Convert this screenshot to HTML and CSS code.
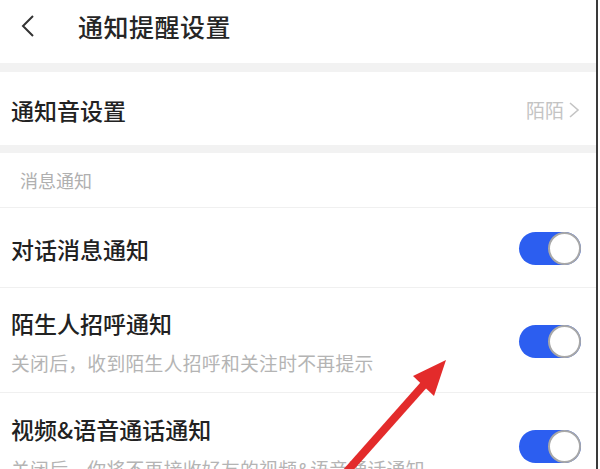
FILE: index.html
```html
<!DOCTYPE html>
<html lang="zh">
<head>
<meta charset="utf-8">
<link rel="stylesheet" href="styles.css">
</head>
<body>
<div class="screen">
  <header class="topbar">
    <svg class="back" width="16" height="24" viewBox="0 0 16 24"><path d="M13 2 L3 12 L13 22" fill="none" stroke="#333" stroke-width="2"/></svg>
    <h1 class="title">通知提醒设置</h1>
  </header>
  <div class="band"></div>
  <div class="row row-sound">
    <span class="label">通知音设置</span>
    <span class="value">陌陌<svg width="12" height="20" viewBox="0 0 12 20"><path d="M2 3 L10 10 L2 17" fill="none" stroke="#c4c4c4" stroke-width="1.6"/></svg></span>
  </div>
  <div class="band band2"></div>
  <div class="section">消息通知</div>
  <div class="row row-toggle">
    <div class="text"><div class="label">对话消息通知</div></div>
    <div class="switch"><div class="knob"></div></div>
  </div>
  <div class="row row-toggle row-tall">
    <div class="text">
      <div class="label">陌生人招呼通知</div>
      <div class="sub">关闭后，收到陌生人招呼和关注时不再提示</div>
    </div>
    <div class="switch"><div class="knob"></div></div>
  </div>
  <div class="row row-toggle row-tall last">
    <div class="text">
      <div class="label">视频&amp;语音通话通知</div>
      <div class="sub">关闭后，你将不再接收好友的视频&amp;语音通话通知</div>
    </div>
    <div class="switch"><div class="knob"></div></div>
  </div>
  <svg class="arrow" width="160" height="130" viewBox="0 0 160 130">
    <line x1="8" y1="125" x2="95" y2="27" stroke="#e32b2b" stroke-width="8" stroke-linecap="butt"/>
    <polygon points="112,8 79,24 100,44" fill="#e32b2b"/>
  </svg>
</div>
</body>
</html>
```

FILE: styles.css
```css
* { box-sizing: border-box; margin: 0; padding: 0; }
html, body { width: 600px; height: 469px; overflow: hidden; background: #fff; }
body {
  font-family: "Noto Sans CJK SC", "Noto Sans", sans-serif;
  color: #222;
}
.screen {
  position: relative;
  width: 598px;
  height: 469px;
  border-right: 2px solid #3a3a3a;
  background: #fff;
  overflow: hidden;
}
.topbar {
  height: 63px;
  display: flex;
  align-items: center;
  padding-left: 20px;
  padding-bottom: 12px;
}
.back { flex: none; }
.title {
  font-size: 25px;
  font-weight: 500;
  margin-left: 42px;
  letter-spacing: 0.5px;
  color: #262626;
}
.band { height: 9px; background: #f2f2f2; }
.band2 { height: 8px; }
.row {
  display: flex;
  align-items: center;
  justify-content: space-between;
  padding: 0 14px 0 11px;
}
.row-sound { height: 73px; padding-top: 2px; }
.label { font-size: 23px; line-height: 30px; color: #222; font-weight: 500; }
.value {
  display: flex;
  align-items: center;
  gap: 4px;
  font-size: 19px;
  color: #c4c4c4;
  margin-right: 2px;
}
.section {
  height: 55px;
  padding-left: 20px;
  padding-top: 14px;
  font-size: 18px;
  line-height: 26px;
  color: #b0b0b0;
  border-bottom: 1px solid #f0f0f0;
}
.row-toggle {
  height: 80px;
  border-bottom: 1px solid #f0f0f0;
  padding-top: 2px;
}
.row-tall {
  height: 105px;
  align-items: center;
}
.row-tall .text { padding-top: 2px; }
.sub {
  margin-top: 12px;
  font-size: 18.8px;
  line-height: 26px;
  letter-spacing: 0.3px;
  color: #b4b4b4;
  white-space: nowrap;
}
.last { border-bottom: none; }
.switch {
  flex: none;
  width: 62px;
  height: 33px;
  border-radius: 17px;
  background: #2c5ef0;
  position: relative;
  margin-right: 1px;
}
.knob {
  position: absolute;
  right: 0;
  top: 0;
  width: 33px;
  height: 33px;
  border-radius: 50%;
  background: #fff;
  border: 2px solid #a8a8a8;
}
.arrow {
  position: absolute;
  left: 334px;
  top: 352px;
}
```
